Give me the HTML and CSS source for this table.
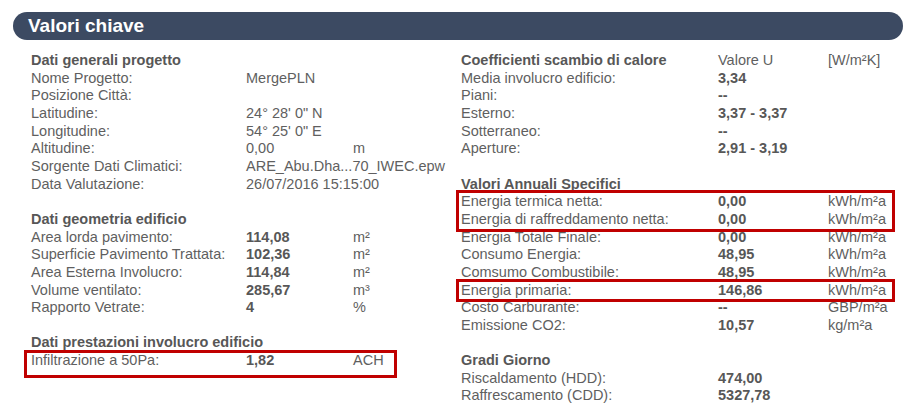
FILE: index.html
```html
<!DOCTYPE html>
<html lang="it">
<head>
  <meta charset="UTF-8">
  <title>Valori chiave</title>
  <link rel="stylesheet" href="styles.css">
</head>
<body>

<div class="panel">
  <h1 class="bar">Valori chiave</h1>

  <div class="cols">
    <div class="col left">
      <div class="group">
        <div class="row head"><span>Dati generali progetto</span></div>
        <div class="row"><span>Nome Progetto:</span><span>MergePLN</span><span></span></div>
        <div class="row"><span>Posizione Città:</span><span></span><span></span></div>
        <div class="row"><span>Latitudine:</span><span>24° 28' 0" N</span><span></span></div>
        <div class="row"><span>Longitudine:</span><span>54° 25' 0" E</span><span></span></div>
        <div class="row"><span>Altitudine:</span><span>0,00</span><span>m</span></div>
        <div class="row"><span>Sorgente Dati Climatici:</span><span class="nowrap">ARE_Abu.Dha...70_IWEC.epw</span><span></span></div>
        <div class="row"><span>Data Valutazione:</span><span class="nowrap">26/07/2016 15:15:00</span><span></span></div>
      </div>

      <div class="group">
        <div class="row head"><span>Dati geometria edificio</span></div>
        <div class="row"><span>Area lorda pavimento:</span><b>114,08</b><span>m²</span></div>
        <div class="row"><span>Superficie Pavimento Trattata:</span><b>102,36</b><span>m²</span></div>
        <div class="row"><span>Area Esterna Involucro:</span><b>114,84</b><span>m²</span></div>
        <div class="row"><span>Volume ventilato:</span><b>285,67</b><span>m³</span></div>
        <div class="row"><span>Rapporto Vetrate:</span><b>4</b><span>%</span></div>
      </div>

      <div class="group">
        <div class="row head"><span>Dati prestazioni involucro edificio</span></div>
        <div class="mark mark-left">
          <div class="row"><span>Infiltrazione a 50Pa:</span><b>1,82</b><span>ACH</span></div>
        </div>
      </div>
    </div>

    <div class="col right">
      <div class="group">
        <div class="row head"><span>Coefficienti scambio di calore</span><span class="plain">Valore U</span><span class="plain">[W/m²K]</span></div>
        <div class="row"><span>Media involucro edificio:</span><b>3,34</b><span></span></div>
        <div class="row"><span>Piani:</span><b>--</b><span></span></div>
        <div class="row"><span>Esterno:</span><b>3,37 - 3,37</b><span></span></div>
        <div class="row"><span>Sotterraneo:</span><b>--</b><span></span></div>
        <div class="row"><span>Aperture:</span><b>2,91 - 3,19</b><span></span></div>
      </div>

      <div class="group">
        <div class="row head"><span>Valori Annuali Specifici</span></div>
        <div class="mark mark-right">
          <div class="row"><span>Energia termica netta:</span><b>0,00</b><span>kWh/m²a</span></div>
          <div class="row"><span>Energia di raffreddamento netta:</span><b>0,00</b><span>kWh/m²a</span></div>
        </div>
        <div class="row"><span>Energia Totale Finale:</span><b>0,00</b><span>kWh/m²a</span></div>
        <div class="row"><span>Consumo Energia:</span><b>48,95</b><span>kWh/m²a</span></div>
        <div class="row"><span>Comsumo Combustibile:</span><b>48,95</b><span>kWh/m²a</span></div>
        <div class="mark mark-right">
          <div class="row"><span>Energia primaria:</span><b>146,86</b><span>kWh/m²a</span></div>
        </div>
        <div class="row"><span>Costo Carburante:</span><b>--</b><span>GBP/m²a</span></div>
        <div class="row"><span>Emissione CO2:</span><b>10,57</b><span>kg/m²a</span></div>
      </div>

      <div class="group">
        <div class="row head"><span>Gradi Giorno</span></div>
        <div class="row"><span>Riscaldamento (HDD):</span><b>474,00</b><span></span></div>
        <div class="row"><span>Raffrescamento (CDD):</span><b>5327,78</b><span></span></div>
      </div>
    </div>
  </div>
</div>

</body>
</html>
```

FILE: styles.css
```css
body { margin: 0; background: #fff; font-family: "Liberation Sans", Arial, sans-serif; color: #5f5f5f; }

.panel { padding-top: 12px; }

.bar {
  margin: 0 17px 0 13px; height: 28px; line-height: 28px;
  padding-left: 15px; border-radius: 14px;
  background: #3c4a62; color: #fff;
  font-size: 19px; font-weight: bold;
}

.cols { display: grid; grid-template-columns: 430px 432px; padding: 12px 0 0 31px; }

.col { font-size: 14.5px; line-height: 17.65px; }
.left { --c1: 215px; --c2: 107px; }
.right { --c1: 257px; --c2: 110px; }

.group + .group { margin-top: 17.65px; }

.row { display: grid; grid-template-columns: var(--c1) var(--c2) auto; white-space: nowrap; }
.row b { color: #575757; }
.row .nowrap { grid-column: span 2; }
.head span { font-weight: bold; color: #575757; }
.head span.plain { font-weight: normal; color: #5f5f5f; }

/* red annotation boxes, drawn with outline so the rows keep their place */
.mark { outline: 3px solid #c00000; outline-offset: -1px; }
.mark-left { margin: 0 66px -6px -5px; padding: 0 0 6px 5px; }
.mark-right { margin: -1px 0 -1px -3px; padding: 1px 0 1px 3px; }
```
